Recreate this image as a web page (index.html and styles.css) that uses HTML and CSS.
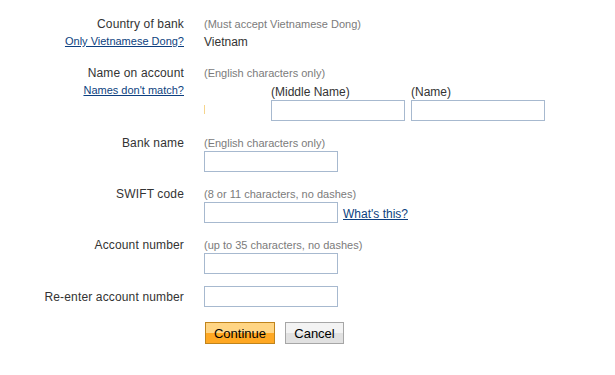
FILE: index.html
```html
<!DOCTYPE html>
<html lang="en">
<head>
    <meta charset="UTF-8">
    <meta name="viewport" content="width=device-width, initial-scale=1.0">
    <title>Bank account details</title>
    <link rel="stylesheet" href="styles.css">
</head>
<body>
    <form class="bank-form" onsubmit="return false;">
        <div class="row row-country">
            <div class="label-col">
                <label>Country of bank</label>
                <a href="#" class="help-link">Only Vietnamese Dong?</a>
            </div>
            <div class="field-col">
                <div class="hint">(Must accept Vietnamese Dong)</div>
                <div class="static-value">Vietnam</div>
            </div>
        </div>

        <div class="row">
            <div class="label-col">
                <label>Name on account</label>
                <a href="#" class="help-link">Names don't match?</a>
            </div>
            <div class="field-col">
                <div class="hint">(English characters only)</div>
                <div class="name-parts">
                    <div class="name-part first-name">
                        <span class="sub-label"></span>
                        <span class="caret"></span>
                    </div>
                    <div class="name-part">
                        <span class="sub-label">(Middle Name)</span>
                        <input type="text" class="text-input">
                    </div>
                    <div class="name-part">
                        <span class="sub-label">(Name)</span>
                        <input type="text" class="text-input">
                    </div>
                </div>
            </div>
        </div>

        <div class="row">
            <div class="label-col">
                <label>Bank name</label>
            </div>
            <div class="field-col">
                <div class="hint">(English characters only)</div>
                <input type="text" class="text-input">
            </div>
        </div>

        <div class="row">
            <div class="label-col">
                <label>SWIFT code</label>
            </div>
            <div class="field-col">
                <div class="hint">(8 or 11 characters, no dashes)</div>
                <div class="input-with-link">
                    <input type="text" class="text-input">
                    <a href="#" class="inline-link">What's this?</a>
                </div>
            </div>
        </div>

        <div class="row row-account">
            <div class="label-col">
                <label>Account number</label>
            </div>
            <div class="field-col">
                <div class="hint">(up to 35 characters, no dashes)</div>
                <input type="text" class="text-input">
            </div>
        </div>

        <div class="row row-reenter">
            <div class="label-col">
                <label>Re-enter account number</label>
            </div>
            <div class="field-col">
                <input type="text" class="text-input">
            </div>
        </div>

        <div class="row">
            <div class="label-col"></div>
            <div class="field-col buttons">
                <button type="submit" class="btn btn-primary">Continue</button>
                <button type="button" class="btn btn-secondary">Cancel</button>
            </div>
        </div>
    </form>
</body>
</html>
```

FILE: styles.css
```css
body {
    margin: 0;
    font-family: "Liberation Sans", Arial, sans-serif;
    font-size: 12px;
    color: #333333;
    background-color: #ffffff;
}
.bank-form {
    padding-top: 17px;
}
.row {
    display: flex;
    margin-bottom: 15px;
}
.row-country {
    margin-bottom: 13px;
}
.row-account {
    margin-top: 1px;
    margin-bottom: 12px;
}
.row-reenter {
    align-items: center;
    margin-bottom: 15px;
}
.label-col {
    width: 184px;
    margin-right: 20px;
    text-align: right;
    flex-shrink: 0;
}
.label-col label {
    display: block;
    line-height: 14px;
    letter-spacing: 0.15px;
}
.help-link {
    display: block;
    margin-top: 4px;
    font-size: 11px;
    line-height: 13px;
    color: #0d3f80;
}
.field-col {
    display: flex;
    flex-direction: column;
    align-items: flex-start;
}
.hint {
    font-size: 11px;
    line-height: 15px;
    color: #7b7b7b;
}
.static-value {
    line-height: 21px;
}
.text-input {
    box-sizing: border-box;
    width: 134px;
    height: 21px;
    margin: 0;
    padding: 2px 3px;
    border: 1px solid #a7b9cf;
    font-family: inherit;
    font-size: 12px;
    background-color: #ffffff;
}
.name-parts {
    display: flex;
    gap: 6px;
}
.name-part {
    display: flex;
    flex-direction: column;
}
.first-name {
    width: 61px;
}
.sub-label {
    display: block;
    padding-top: 4px;
    line-height: 15px;
    height: 15px;
}
.caret {
    display: block;
    width: 1px;
    height: 9px;
    margin-top: 5px;
    background-color: #f6d58c;
}
.input-with-link {
    display: flex;
    align-items: center;
}
.inline-link {
    margin-left: 5px;
    color: #0d3f80;
    line-height: 14px;
    padding-top: 2px;
}
.buttons {
    flex-direction: row;
    gap: 10px;
    padding-left: 1px;
}
.btn {
    box-sizing: border-box;
    height: 22px;
    margin: 0;
    padding: 0;
    font-family: inherit;
    font-size: 13px;
    color: #000000;
    cursor: pointer;
}
.btn-primary {
    width: 70px;
    border: 1px solid #c0841c;
    background: linear-gradient(#ffd584 50%, #ffa823 50%);
}
.btn-secondary {
    width: 59px;
    border: 1px solid #a6a6a6;
    background: linear-gradient(#f3f3f3 50%, #e1e1e1 50%);
}
```
